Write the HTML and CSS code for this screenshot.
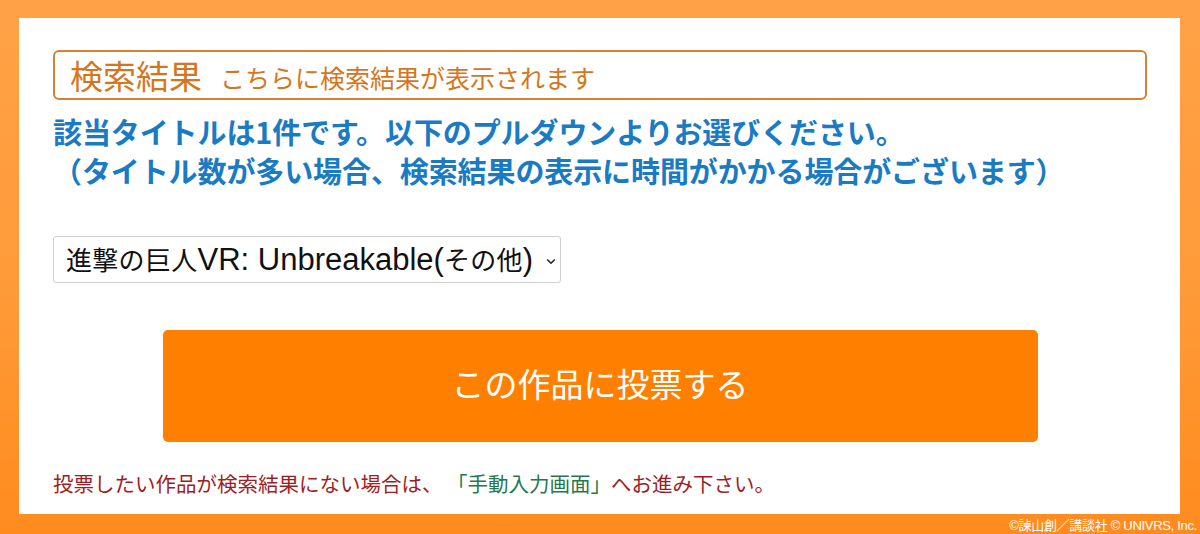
FILE: index.html
```html
<!DOCTYPE html>
<html lang="ja">
<head>
<meta charset="utf-8">
<title>検索結果</title>
<link rel="stylesheet" href="styles.css">
</head>
<body>
<div class="page">
  <main class="panel">
    <div class="result-box">
      <span class="result-title">検索結果</span>
      <span class="result-sub">こちらに検索結果が表示されます</span>
    </div>
    <p class="notice">該当タイトルは1件です。以下のプルダウンよりお選びください。<br>（タイトル数が多い場合、検索結果の表示に時間がかかる場合がございます）</p>
    <div class="select" role="combobox" aria-expanded="false">
      <span class="select-text"><span class="jp">進撃の巨人</span>VR: Unbreakable(<span class="jp">その他</span>)</span>
      <svg class="chevron" width="10" height="7" viewBox="0 0 10 7" aria-hidden="true"><path d="M1.2 1.5 L5 5.2 L8.8 1.5" fill="none" stroke="#222" stroke-width="1.6"/></svg>
    </div>
    <div class="btn-row">
      <button class="vote-btn" type="button">この作品に投票する</button>
    </div>
    <p class="note">投票したい作品が検索結果にない場合は、 <span class="link">「手動入力画面」</span>へお進み下さい。</p>
  </main>
  <footer class="copy">©諫山創／講談社 © UNIVRS, Inc.</footer>
</div>
</body>
</html>
```

FILE: styles.css
```css
* { box-sizing: border-box; }
html, body { margin: 0; padding: 0; }
body {
  width: 1200px;
  height: 534px;
  overflow: hidden;
  font-family: "Noto Sans CJK JP", "Liberation Sans", sans-serif;
  background: linear-gradient(180deg, #ffa247 0%, #ff9a38 55%, #ff8b1e 100%);
}
.page {
  display: flex;
  flex-direction: column;
  height: 534px;
  padding: 18px 20px 0 19px;
}
.panel {
  background: #ffffff;
  height: 496px;
  padding: 32px 33px 0 34px;
}
.result-box {
  height: 50px;
  border: 2px solid #d6822f;
  border-radius: 6px;
  padding: 0 15px;
  display: flex;
  align-items: center;
  gap: 18px;
}
.result-title {
  font-size: 33px;
  line-height: 46px;
  color: #d5761c;
}
.result-sub {
  font-size: 25px;
  line-height: 46px;
  color: #d5761c;
  padding-top: 3px;
}
.notice {
  margin: 12px 0 0 0;
  font-size: 29px;
  line-height: 39px;
  font-weight: 700;
  color: #1a7bc3;
  letter-spacing: -0.1px;
}
.select {
  margin-top: 46px;
  width: 508px;
  height: 47px;
  border: 1px solid #cfcfcf;
  border-radius: 3px;
  display: flex;
  align-items: center;
  justify-content: space-between;
  padding: 0 4px 0 12px;
  font-family: "Liberation Sans", "Noto Sans CJK JP", sans-serif;
}
.select-text {
  font-size: 31px;
  color: #111;
  line-height: 34px;
  white-space: nowrap;
  letter-spacing: 0;
}
.jp {
  font-family: "Noto Sans CJK JP", sans-serif;
  font-size: 26px;
  letter-spacing: 0.3px;
}
.chevron { flex: none; margin-top: 3px; }
.btn-row {
  margin-top: 47px;
  display: flex;
  justify-content: center;
}
.vote-btn {
  width: 875px;
  height: 112px;
  border: none;
  border-radius: 5px;
  background: #ff8000;
  color: #ffffff;
  font-family: "Noto Sans CJK JP", sans-serif;
  font-size: 33px;
  padding: 0 0 7px 0;
}
.note {
  margin: 26px 0 0 0;
  font-size: 20.5px;
  line-height: 30px;
  color: #a11c22;
  white-space: nowrap;
}
.link { color: #25784d; }
.copy {
  height: 20px;
  display: flex;
  align-items: center;
  justify-content: flex-end;
  margin-right: -17px;
  font-family: "Liberation Sans", "Noto Sans CJK JP", sans-serif;
  font-size: 13px;
  color: #ffffff;
  letter-spacing: -0.3px;
}
```
